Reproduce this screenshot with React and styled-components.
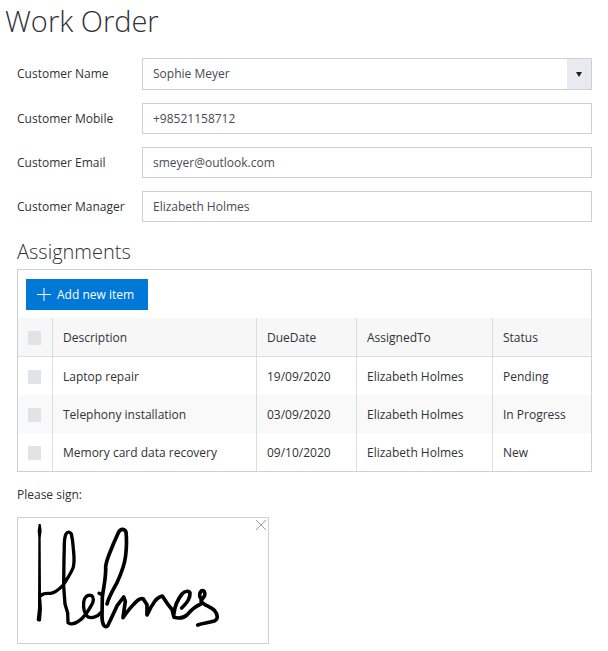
import React from 'react';
import styled, { createGlobalStyle } from 'styled-components';

const GlobalStyle = createGlobalStyle`
  *, *::before, *::after {
    box-sizing: border-box;
  }
  body {
    margin: 0;
    background: #fff;
    color: #2f3237;
    font-family: 'Open Sans', 'Noto Sans', sans-serif;
    font-size: 12px;
    line-height: 16px;
  }
  button, input, select {
    font: inherit;
    color: inherit;
  }
`;

const Page = styled.main`
  padding: 0 16px 7px 17px;
`;

const Title = styled.h1`
  margin: 0 0 16px -12px;
  font-size: 29px;
  font-weight: 300;
  line-height: 42px;
`;

const Subtitle = styled.h2`
  margin: 16px 0 3px;
  font-size: 20px;
  font-weight: 300;
  line-height: 28px;
`;

const Fields = styled.div`
  display: flex;
  flex-direction: column;
  gap: 13px;
`;

const Field = styled.div`
  display: grid;
  grid-template-columns: 125px 1fr;
  align-items: center;
`;

const TextInput = styled.input`
  width: 100%;
  height: 31px;
  padding: 0 10px;
  border: 1px solid #ced0d6;
  border-radius: 0;
  background: #fff;
  color: #474c54;
`;

const SelectBox = styled.div`
  position: relative;
`;

const Select = styled.select`
  appearance: none;
  display: block;
  width: 100%;
  height: 32px;
  padding: 0 34px 0 10px;
  border: 1px solid #ced0d6;
  border-radius: 0;
  background: #fff;
  color: #474c54;
`;

const Arrow = styled.span`
  position: absolute;
  top: 1px;
  right: 1px;
  bottom: 1px;
  display: flex;
  align-items: center;
  justify-content: center;
  width: 24px;
  background: #e9eaef;
  pointer-events: none;
`;

const Grid = styled.section`
  border: 1px solid #ced0d4;
`;

const Toolbar = styled.div`
  padding: 9px 8px 8px;
`;

const AddButton = styled.button`
  display: flex;
  align-items: center;
  gap: 6px;
  height: 31px;
  padding: 0 14px 0 11px;
  border: 0;
  background: #0078d7;
  color: #fff;
`;

const Table = styled.table`
  width: 100%;
  border-collapse: separate;
  border-spacing: 0;
  table-layout: fixed;
`;

const Col = styled.col`
  width: ${props => props.$width || 'auto'};
`;

const HeadCell = styled.th`
  height: 39px;
  padding: 2px 10px 0;
  border-bottom: 1px solid #dcdde1;
  background: #f7f7f7;
  font-weight: 400;
  text-align: left;

  & + & {
    border-left: 1px solid #dcdde1;
  }
`;

const Row = styled.tr`
  &:nth-child(even) {
    background: #f9f9f9;
  }
`;

const Cell = styled.td`
  height: 38px;
  padding: 2px 10px 0;
  white-space: nowrap;

  & + & {
    border-left: 1px solid #dcdde1;
  }
`;

const Checkbox = styled.input`
  appearance: none;
  display: block;
  width: 13px;
  height: 14px;
  margin: 0;
  background: #e1e4e7;

  &:checked {
    background: #0078d7;
  }
`;

const SignLabel = styled.p`
  margin: 15px 0 14px;
`;

const SignaturePad = styled.div`
  position: relative;
  width: 252px;
  border: 1px solid #ced0d4;

  > svg {
    display: block;
    width: 100%;
  }
`;

const ClearButton = styled.button`
  position: absolute;
  top: 0;
  right: 0;
  display: flex;
  padding: 1px;
  border: 0;
  background: none;
  color: #9b9fa3;
`;

const customers = ['Sophie Meyer'];

const details = [
  { id: 'mobile', label: 'Customer Mobile', type: 'tel', value: '+98521158712' },
  { id: 'email', label: 'Customer Email', type: 'email', value: 'smeyer@outlook.com' },
  { id: 'manager', label: 'Customer Manager', type: 'text', value: 'Elizabeth Holmes' },
];

const assignments = [
  { description: 'Laptop repair', dueDate: '19/09/2020', assignedTo: 'Elizabeth Holmes', status: 'Pending' },
  { description: 'Telephony installation', dueDate: '03/09/2020', assignedTo: 'Elizabeth Holmes', status: 'In Progress' },
  { description: 'Memory card data recovery', dueDate: '09/10/2020', assignedTo: 'Elizabeth Holmes', status: 'New' },
];

const Signature = () => (
  <svg
    viewBox="0 0 750 375"
    fill="none"
    stroke="#000"
    strokeWidth="10"
    strokeLinecap="round"
    strokeLinejoin="round"
    role="img"
    aria-label="Signature"
  >
    <path
      d="M62 18H68L71 38L68 60L69 230L72 272L69 308Q63 314 56 307L60 270L61 60L59 38Z"
      fill="#000"
      stroke="none"
    />
    <path d="M70 232C78 224 88 227 98 226C114 224 126 211 135 202C144 187 157 170 165 150C171 132 168 112 166 92C165 76 163 60 160 48C155 40 148 41 144 48C136 64 140 90 138 116L137 205L141 258L149 285L150 314C160 321 172 317 184 308C198 298 210 280 220 262C228 250 228 238 221 233C208 228 199 238 197 252C195 272 199 286 209 296C220 302 238 298 248 284" />
    <path d="M243 226L252 229" />
    <path d="M267 258C272 238 285 216 297 194C309 168 320 140 323 112C326 86 326 60 324 42C319 31 308 32 302 42L286 78C277 102 265 124 263 146C265 176 256 210 253 238L252 300C254 324 262 332 270 322C282 296 288 284 298 262L317 237L322 250L315 299C327 282 337 268 348 258C358 246 367 239 376 243L387 260V291C395 278 397 268 404 260C411 246 422 237 433 234C441 246 450 262 462 274L468 298C484 302 498 300 508 290C520 276 534 264 548 259" strokeWidth="11" />
    <path d="M467 290C470 266 479 244 492 228C502 217 514 218 516 225C517 238 506 256 491 270" strokeWidth="11" />
    <path d="M551 246C544 238 542 226 550 219C558 215 562 223 560 232C557 240 550 244 549 250C558 262 578 266 590 278C601 290 600 304 589 309C574 314 556 315 539 321" strokeWidth="11" />
  </svg>
);

class App extends React.Component {
  render() {
    return (
      <Page>
        <GlobalStyle />
        <Title>Work Order</Title>
        <Fields>
          <Field>
            <label htmlFor="name">Customer Name</label>
            <SelectBox>
              <Select id="name">
                {customers.map(name => (
                  <option key={name}>{name}</option>
                ))}
              </Select>
              <Arrow>
                <svg width="6" height="5" viewBox="0 0 6 5">
                  <path d="M0 0H6L3 5Z" fill="#1b1d22" />
                </svg>
              </Arrow>
            </SelectBox>
          </Field>
          {details.map(({ id, label, type, value }) => (
            <Field key={id}>
              <label htmlFor={id}>{label}</label>
              <TextInput id={id} type={type} defaultValue={value} />
            </Field>
          ))}
        </Fields>

        <Subtitle>Assignments</Subtitle>
        <Grid>
          <Toolbar>
            <AddButton type="button">
              <svg width="14" height="14" viewBox="0 0 14 14" stroke="currentColor">
                <path d="M7 0V13M0 6.5H14" />
              </svg>
              Add new item
            </AddButton>
          </Toolbar>
          <Table>
            <colgroup>
              <Col $width="34px" />
              <Col />
              <Col $width="100px" />
              <Col $width="136px" />
              <Col $width="99px" />
            </colgroup>
            <thead>
              <tr>
                <HeadCell>
                  <Checkbox type="checkbox" aria-label="Select all" />
                </HeadCell>
                <HeadCell>Description</HeadCell>
                <HeadCell>DueDate</HeadCell>
                <HeadCell>AssignedTo</HeadCell>
                <HeadCell>Status</HeadCell>
              </tr>
            </thead>
            <tbody>
              {assignments.map(item => (
                <Row key={item.description}>
                  <Cell>
                    <Checkbox type="checkbox" aria-label={item.description} />
                  </Cell>
                  <Cell>{item.description}</Cell>
                  <Cell>{item.dueDate}</Cell>
                  <Cell>{item.assignedTo}</Cell>
                  <Cell>{item.status}</Cell>
                </Row>
              ))}
            </tbody>
          </Table>
        </Grid>

        <SignLabel>Please sign:</SignLabel>
        <SignaturePad>
          <Signature />
          <ClearButton type="button" aria-label="Clear signature">
            <svg width="12" height="12" viewBox="0 0 12 12" stroke="currentColor">
              <path d="M1 1L11 11M11 1L1 11" />
            </svg>
          </ClearButton>
        </SignaturePad>
      </Page>
    );
  }
}

export default App;
